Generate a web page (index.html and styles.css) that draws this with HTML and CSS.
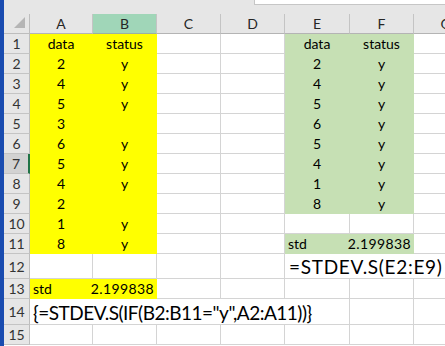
FILE: index.html
```html
<!DOCTYPE html>
<html lang="en">
<head>
    <meta charset="UTF-8">
    <title>Book1 - Excel</title>
    <link rel="stylesheet" href="styles.css">
</head>
<body>
    <div class="app">
        <div class="edge"></div>
        <div class="sheet">
            <div class="toolbar">
                <div class="formula-box"></div>
            </div>

            <div class="grid">
                <!-- column headers -->
                <div class="corner">
                    <svg width="12" height="12" viewBox="0 0 12 12"><polygon points="11,0 11,11 0,11" fill="#b5b5b5"/></svg>
                </div>
                <div class="col-head">A</div>
                <div class="col-head selected">B</div>
                <div class="col-head">C</div>
                <div class="col-head">D</div>
                <div class="col-head">E</div>
                <div class="col-head">F</div>
                <div class="col-head">G</div>

                <!-- row 1 -->
                <div class="row-head">1</div>
                <div class="cell fill-yellow center">data</div>
                <div class="cell fill-yellow center">status</div>
                <div class="cell"></div>
                <div class="cell"></div>
                <div class="cell fill-green center">data</div>
                <div class="cell fill-green center">status</div>
                <div class="cell"></div>

                <!-- row 2 -->
                <div class="row-head">2</div>
                <div class="cell fill-yellow center">2</div>
                <div class="cell fill-yellow center">y</div>
                <div class="cell"></div>
                <div class="cell"></div>
                <div class="cell fill-green center">2</div>
                <div class="cell fill-green center">y</div>
                <div class="cell"></div>

                <!-- row 3 -->
                <div class="row-head">3</div>
                <div class="cell fill-yellow center">4</div>
                <div class="cell fill-yellow center">y</div>
                <div class="cell"></div>
                <div class="cell"></div>
                <div class="cell fill-green center">4</div>
                <div class="cell fill-green center">y</div>
                <div class="cell"></div>

                <!-- row 4 -->
                <div class="row-head">4</div>
                <div class="cell fill-yellow center">5</div>
                <div class="cell fill-yellow center">y</div>
                <div class="cell"></div>
                <div class="cell"></div>
                <div class="cell fill-green center">5</div>
                <div class="cell fill-green center">y</div>
                <div class="cell"></div>

                <!-- row 5 -->
                <div class="row-head">5</div>
                <div class="cell fill-yellow center">3</div>
                <div class="cell fill-yellow center"></div>
                <div class="cell"></div>
                <div class="cell"></div>
                <div class="cell fill-green center">6</div>
                <div class="cell fill-green center">y</div>
                <div class="cell"></div>

                <!-- row 6 -->
                <div class="row-head">6</div>
                <div class="cell fill-yellow center">6</div>
                <div class="cell fill-yellow center">y</div>
                <div class="cell"></div>
                <div class="cell"></div>
                <div class="cell fill-green center">5</div>
                <div class="cell fill-green center">y</div>
                <div class="cell"></div>

                <!-- row 7 (active row) -->
                <div class="row-head active">7</div>
                <div class="cell fill-yellow center">5</div>
                <div class="cell fill-yellow center">y</div>
                <div class="cell"></div>
                <div class="cell"></div>
                <div class="cell fill-green center">4</div>
                <div class="cell fill-green center">y</div>
                <div class="cell"></div>

                <!-- row 8 -->
                <div class="row-head">8</div>
                <div class="cell fill-yellow center">4</div>
                <div class="cell fill-yellow center">y</div>
                <div class="cell"></div>
                <div class="cell"></div>
                <div class="cell fill-green center">1</div>
                <div class="cell fill-green center">y</div>
                <div class="cell"></div>

                <!-- row 9 -->
                <div class="row-head">9</div>
                <div class="cell fill-yellow center">2</div>
                <div class="cell fill-yellow center"></div>
                <div class="cell"></div>
                <div class="cell"></div>
                <div class="cell fill-green center">8</div>
                <div class="cell fill-green center">y</div>
                <div class="cell"></div>

                <!-- row 10 -->
                <div class="row-head">10</div>
                <div class="cell fill-yellow center">1</div>
                <div class="cell fill-yellow center">y</div>
                <div class="cell"></div>
                <div class="cell"></div>
                <div class="cell"></div>
                <div class="cell"></div>
                <div class="cell"></div>

                <!-- row 11 -->
                <div class="row-head">11</div>
                <div class="cell fill-yellow center">8</div>
                <div class="cell fill-yellow center">y</div>
                <div class="cell"></div>
                <div class="cell"></div>
                <div class="cell fill-green">std</div>
                <div class="cell fill-green num">2.199838</div>
                <div class="cell"></div>

                <!-- row 12 -->
                <div class="row-head">12</div>
                <div class="cell"></div>
                <div class="cell"></div>
                <div class="cell"></div>
                <div class="cell"></div>
                <div class="cell big wide span-3">=STDEV.S(E2:E9)</div>

                <!-- row 13 -->
                <div class="row-head">13</div>
                <div class="cell fill-yellow">std</div>
                <div class="cell fill-yellow num">2.199838</div>
                <div class="cell"></div>
                <div class="cell"></div>
                <div class="cell"></div>
                <div class="cell"></div>
                <div class="cell"></div>

                <!-- row 14 -->
                <div class="row-head">14</div>
                <div class="cell big tight span-5">{=STDEV.S(IF(B2:B11="y",A2:A11))}</div>
                <div class="cell"></div>
                <div class="cell"></div>

                <!-- row 15 -->
                <div class="row-head">15</div>
                <div class="cell"></div>
                <div class="cell"></div>
                <div class="cell"></div>
                <div class="cell"></div>
                <div class="cell"></div>
                <div class="cell"></div>
                <div class="cell"></div>
            </div>
        </div>
    </div>
</body>
</html>
```

FILE: styles.css
```css
* {
    box-sizing: border-box;
}

body {
    margin: 0;
    font-family: Lato, 'Liberation Sans', sans-serif;
    background-color: #fff;
    overflow: hidden;
}

.app {
    display: flex;
    height: 346px;
}

.edge {
    flex: none;
    width: 4px;
    background-color: #1a4cb0;
}

.sheet {
    flex: 1;
    overflow: hidden;
}

.toolbar {
    height: 14px;
    background-color: #e6e6e6;
}

.formula-box {
    margin-left: 250px;
    height: 5px;
    background-color: #fff;
    border-left: 1px solid #c6c6c6;
    border-bottom: 1px solid #c6c6c6;
}

.grid {
    display: grid;
    grid-template-columns: 26px 63px 64px 64px 64px 65px 64px 64px;
    grid-template-rows: 20px repeat(11, 20px) 25px 20px 26px 20px;
    width: max-content;
}

/* headers */
.corner {
    display: flex;
    align-items: flex-end;
    justify-content: flex-end;
    padding: 0 3px 4px 0;
    background-color: #e6e6e6;
    border-right: 1px solid #bdbdbd;
    border-bottom: 1px solid #bdbdbd;
}

.col-head,
.row-head {
    display: flex;
    align-items: center;
    justify-content: center;
    font-size: 14px;
    color: #262626;
    background-color: #e6e6e6;
}

.col-head {
    border-right: 1px solid #c4c4c4;
    border-bottom: 1px solid #b4b4b4;
}

.col-head.selected {
    background-color: #a0d6b8;
    border-bottom-color: #9ab0a3;
}

.row-head {
    color: #333;
    border-right: 1px solid #bdbdbd;
    border-bottom: 1px solid #c4c4c4;
}

.row-head.active {
    background-color: #d2d2d2;
    border-right: 2px solid #217346;
}

/* cells */
.cell {
    display: flex;
    align-items: flex-end;
    padding: 0 3px;
    font-size: 14px;
    line-height: 19px;
    color: #000;
    white-space: nowrap;
    border-right: 1px solid #d4d4d4;
    border-bottom: 1px solid #d4d4d4;
}

.center {
    justify-content: center;
}

.num {
    justify-content: flex-end;
    padding-right: 2px;
    letter-spacing: 0.4px;
}

.fill-yellow {
    background-color: #ffff00;
    border-color: #ffff00;
}

.fill-green {
    background-color: #c6e0b4;
    border-color: #c6e0b4;
}

/* formulas typed as text, shown in a larger size */
.big {
    font-size: 19px;
    line-height: 22px;
}

.big.wide {
    padding-left: 4px;
    letter-spacing: 0.7px;
}

.big.tight {
    letter-spacing: -0.5px;
}

.span-3 {
    grid-column: span 3;
}

.span-5 {
    grid-column: span 5;
}
```
